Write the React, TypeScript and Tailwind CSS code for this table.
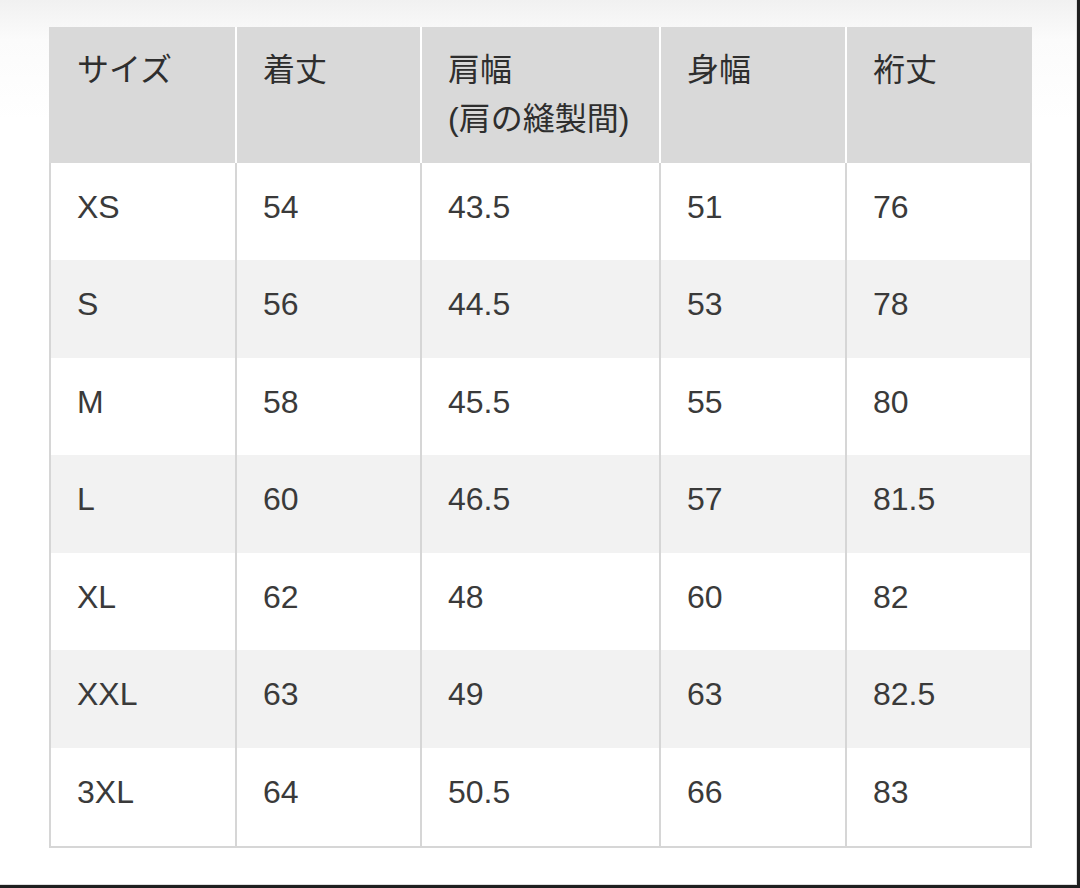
const rows = [
  { size: "XS", length: "54", shoulder: "43.5", body: "51", sleeve: "76", h: "h-[97px]", bg: "bg-white" },
  { size: "S", length: "56", shoulder: "44.5", body: "53", sleeve: "78", h: "h-[98px]", bg: "bg-[#f2f2f2]" },
  { size: "M", length: "58", shoulder: "45.5", body: "55", sleeve: "80", h: "h-[97px]", bg: "bg-white" },
  { size: "L", length: "60", shoulder: "46.5", body: "57", sleeve: "81.5", h: "h-[98px]", bg: "bg-[#f2f2f2]" },
  { size: "XL", length: "62", shoulder: "48", body: "60", sleeve: "82", h: "h-[97px]", bg: "bg-white" },
  { size: "XXL", length: "63", shoulder: "49", body: "63", sleeve: "82.5", h: "h-[98px]", bg: "bg-[#f2f2f2]" },
  { size: "3XL", length: "64", shoulder: "50.5", body: "66", sleeve: "83", h: "h-[98px]", bg: "bg-white" },
];

const cols = "grid grid-cols-[186px_185px_239px_186px_187px]";

export default function App() {
  return (
    <div className="relative h-[888px] w-[1080px] overflow-hidden bg-[linear-gradient(180deg,#f1f1f1_0px,#fbfbfb_40px,#ffffff_120px)] font-['Liberation_Sans','Noto_Sans_CJK_JP',sans-serif] text-[32px] leading-[48px] text-[#3a3a3a]">
      <div className="h-full w-full border-r-[3px] border-b-[3px] border-[#1f1f1f]">
        <div className="h-full w-full border-r border-b border-[#dedede] pl-[49px] pt-[27px]">
          <div className="w-[983px]">
            {/* header */}
            <div className={`${cols} h-[136px] bg-[#d9d9d9] leading-[49px] text-[#2e2e2e]`}>
              <div className="pl-[28px] pt-[19px]">サイズ</div>
              <div className="border-l-2 border-white pl-[26px] pt-[19px]">着丈</div>
              <div className="border-l-2 border-white pl-[26px] pt-[19px]">
                <div>肩幅</div>
                <div>(肩の縫製間)</div>
              </div>
              <div className="border-l-2 border-white pl-[26px] pt-[19px]">身幅</div>
              <div className="border-l-2 border-white pl-[26px] pt-[19px]">裄丈</div>
            </div>

            {/* body */}
            <div className="border-b-2 border-[#d6d6d6]">
              {rows.map((r) => (
                <div key={r.size} className={`${cols} ${r.h} ${r.bg}`}>
                  <div className="border-l-2 border-[#d6d6d6] pl-[26px] pt-[20px]">{r.size}</div>
                  <div className="border-l-2 border-[#d6d6d6] pl-[26px] pt-[20px]">{r.length}</div>
                  <div className="border-l-2 border-[#d6d6d6] pl-[26px] pt-[20px]">{r.shoulder}</div>
                  <div className="border-l-2 border-[#d6d6d6] pl-[26px] pt-[20px]">{r.body}</div>
                  <div className="border-x-2 border-[#d6d6d6] pl-[26px] pt-[20px]">{r.sleeve}</div>
                </div>
              ))}
            </div>
          </div>
        </div>
      </div>
    </div>
  );
}
